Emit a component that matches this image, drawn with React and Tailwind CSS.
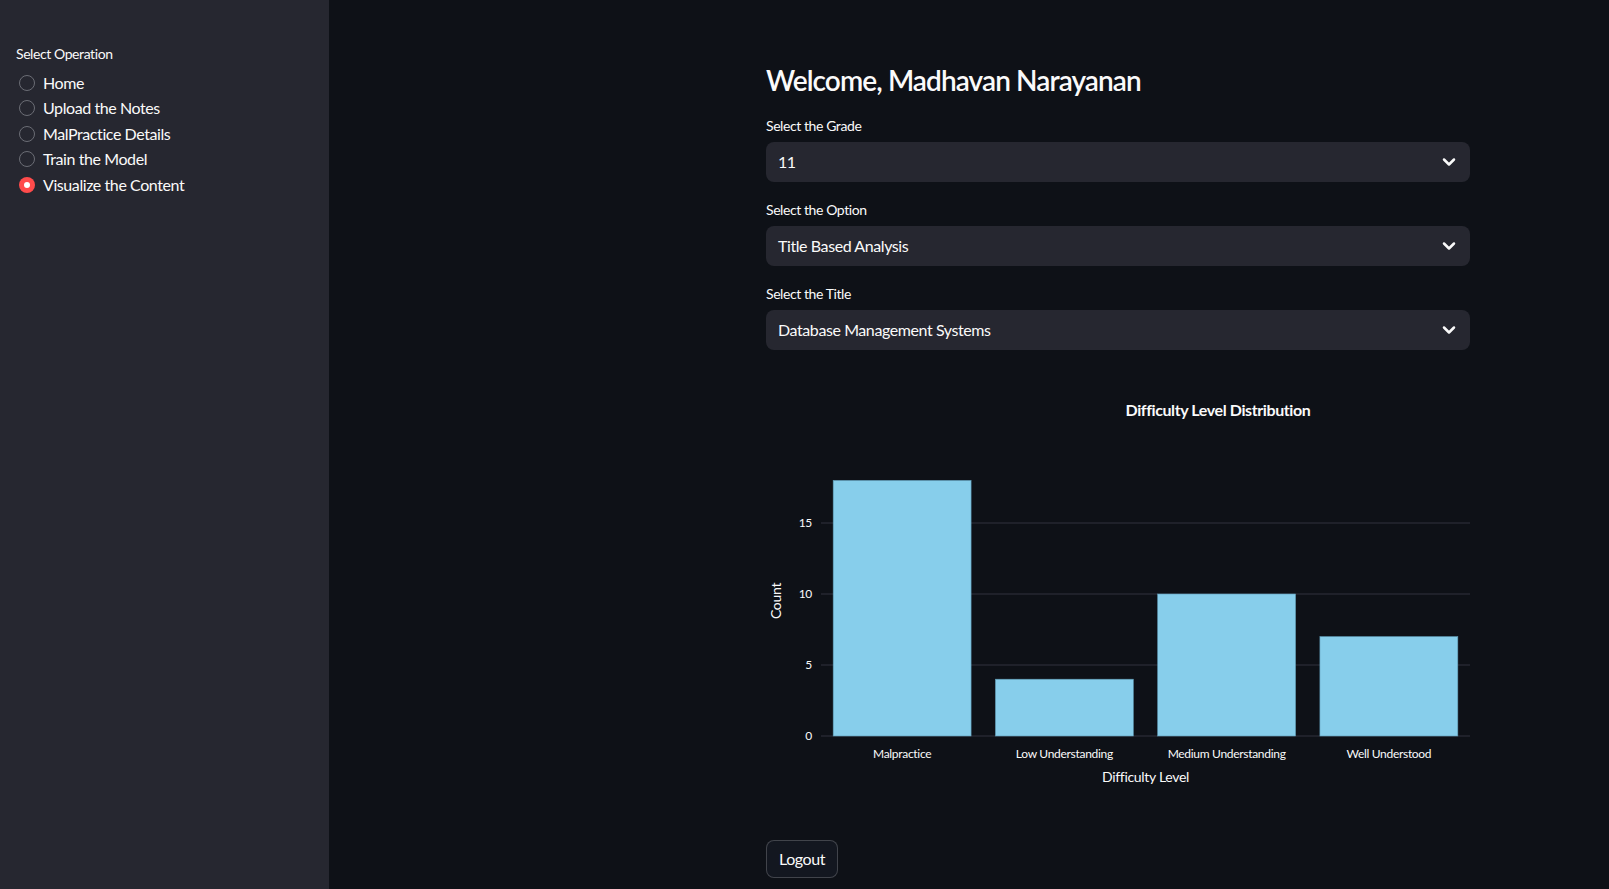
import React from 'react'

const operations = ['Home', 'Upload the Notes', 'MalPractice Details', 'Train the Model', 'Visualize the Content']

const selects = [
  { label: 'Select the Grade', value: '11' },
  { label: 'Select the Option', value: 'Title Based Analysis' },
  { label: 'Select the Title', value: 'Database Management Systems' },
]

const data = [
  { name: 'Malpractice', count: 18 },
  { name: 'Low Understanding', count: 4 },
  { name: 'Medium Understanding', count: 10 },
  { name: 'Well Understood', count: 7 },
]

// plot area inside the svg
const plotLeft = 55
const plotRight = 704
const zeroY = 370
const unit = 14.2

function Chevron() {
  return (
    <svg className="w-5 h-5" viewBox="0 0 24 24" fill="none" stroke="#fafafa" strokeWidth="3" strokeLinecap="round" strokeLinejoin="round">
      <path d="M6 9l6 6 6-6" />
    </svg>
  )
}

function Chart() {
  const slot = (plotRight - plotLeft) / data.length
  const barW = slot * 0.85
  const font = "Lato, 'Noto Sans', sans-serif"

  return (
    <svg width="704" height="450" viewBox="0 0 704 450" className="block" letterSpacing="-0.3">
      <text x="452" y="50" textAnchor="middle" fill="#fafafa" fontSize="16" fontWeight="700" fontFamily={font} letterSpacing="-0.4">
        Difficulty Level Distribution
      </text>

      {[0, 5, 10, 15].map((t) => (
        <g key={t}>
          <line x1={plotLeft} x2={plotRight} y1={zeroY - t * unit} y2={zeroY - t * unit} stroke="#31333f" strokeWidth="1" />
          <text x="46" y={zeroY - t * unit + 4} textAnchor="end" fill="#fafafa" fontSize="12" fontFamily={font}>
            {t}
          </text>
        </g>
      ))}

      {data.map((d, i) => {
        const x = plotLeft + slot * i + (slot - barW) / 2
        const h = d.count * unit
        return (
          <g key={d.name}>
            <rect x={x} y={zeroY - h} width={barW} height={h} fill="#87ceeb" stroke="#5f9bb5" strokeWidth="0.6" />
            <text x={x + barW / 2} y="392" textAnchor="middle" fill="#fafafa" fontSize="12" fontFamily={font}>
              {d.name}
            </text>
          </g>
        )
      })}

      <text x="379.5" y="416" textAnchor="middle" fill="#fafafa" fontSize="14" fontFamily={font}>
        Difficulty Level
      </text>
      <text x="0" y="0" transform="translate(15 235) rotate(-90)" textAnchor="middle" fill="#fafafa" fontSize="14" fontFamily={font}>
        Count
      </text>
    </svg>
  )
}

function App() {
  return (
    <div className="flex h-screen w-full overflow-hidden bg-[#0e1117] text-[#fafafa] tracking-[-0.026em] font-['Lato','Noto_Sans',sans-serif]">
      <aside className="w-[329px] shrink-0 h-full bg-[#262730] pt-[41px] pl-4">
        <div className="h-6 mb-1 flex items-center text-[14px]">Select Operation</div>
        <div className="flex flex-col pt-[1px]">
          {operations.map((op) => {
            const active = op === 'Visualize the Content'
            return (
              <div key={op} className="h-[25.5px] flex items-center gap-2 pl-[3px]">
                {active ? (
                  <span className="w-4 h-4 rounded-full bg-[#ff4b4b] flex items-center justify-center">
                    <span className="w-[6px] h-[6px] rounded-full bg-white" />
                  </span>
                ) : (
                  <span className="w-4 h-4 rounded-full border border-[#6b6d75]" />
                )}
                <span className="text-[16px]">{op}</span>
              </div>
            )
          })}
        </div>
      </aside>

      <main className="flex-1 pl-[437px] pt-[63px]">
        <div className="w-[704px] flex flex-col">
          <h2 className="h-[34px] leading-[34px] text-[28px] font-semibold tracking-[-0.032em]">Welcome, Madhavan Narayanan</h2>

          <div className="mt-[17px] flex flex-col gap-4">
            {selects.map((s) => (
              <div key={s.label}>
                <div className="h-6 mb-1 flex items-center text-[14px] -translate-y-px">{s.label}</div>
                <div className="h-10 rounded-lg bg-[#262730] flex items-center justify-between pl-3 pr-[11px]">
                  <span className="text-[16px]">{s.value}</span>
                  <Chevron />
                </div>
              </div>
            ))}
          </div>

          <div className="mt-4">
            <Chart />
          </div>

          <div className="mt-[24px]">
            <button className="h-[38px] w-[72px] rounded-lg border border-[#fafafa33] bg-[#131720] text-[16px]">
              Logout
            </button>
          </div>
        </div>
      </main>
    </div>
  )
}

export default App
